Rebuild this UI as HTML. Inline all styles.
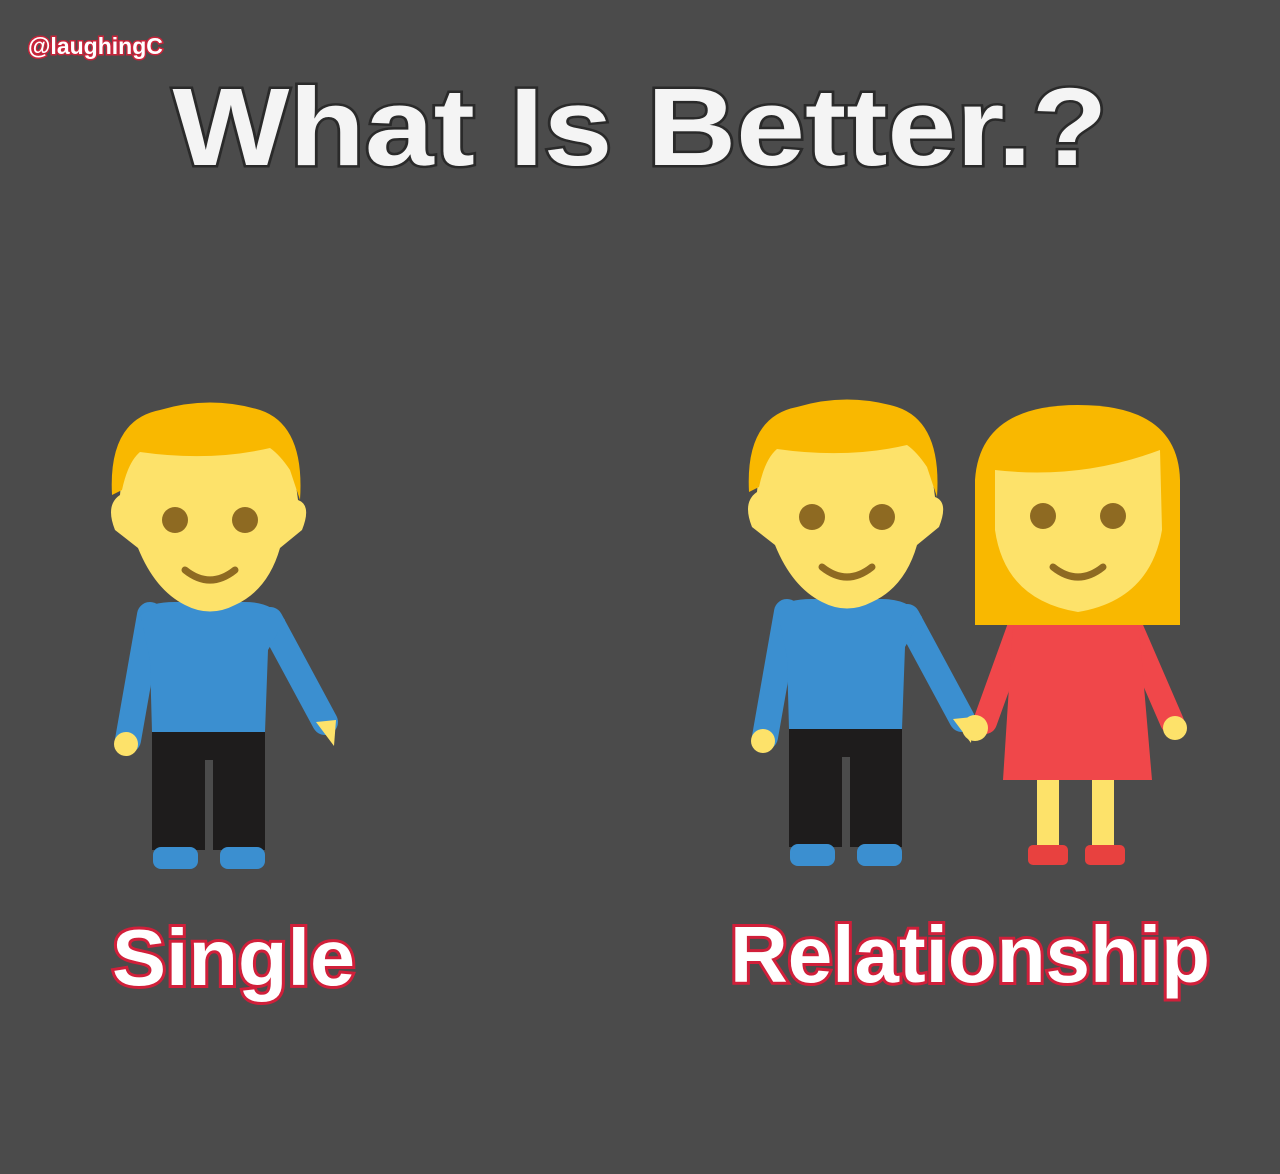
<!DOCTYPE html>
<html><head><meta charset="utf-8"><style>
html,body{margin:0;padding:0;background:#4b4b4b;}
svg{display:block}
text{font-family:"Liberation Sans",sans-serif;font-weight:bold;paint-order:stroke fill;}
</style></head><body>
<svg width="1280" height="1174" viewBox="0 0 1280 1174" xmlns="http://www.w3.org/2000/svg">
<rect width="1280" height="1174" fill="#4b4b4b"/>
<defs>
<g id="man">
  <path d="M150 615 L128 740" stroke="#3b8fd0" stroke-width="26" stroke-linecap="round" fill="none"/>
  <path d="M270 620 L325 722" stroke="#3b8fd0" stroke-width="26" stroke-linecap="round" fill="none"/>
  <circle cx="126" cy="744" r="12" fill="#fde26a"/>
  <path d="M316 722 L336 720 L334 746 Z" fill="#fde26a"/>
  <rect x="152" y="725" width="113" height="125" fill="#1e1c1c"/>
  <rect x="205" y="760" width="8" height="90" fill="#4b4b4b"/>
  <rect x="153" y="847" width="45" height="22" rx="8" fill="#3b8fd0"/>
  <rect x="220" y="847" width="45" height="22" rx="8" fill="#3b8fd0"/>
  <path d="M140 612 Q150 602 175 602 L245 602 Q272 602 285 620 L268 650 L265 732 L152 732 L150 660 Z" fill="#3b8fd0"/>
  <path d="M125 440 L290 440 L298 500 Q312 505 302 530 L280 548 Q268 590 235 605 Q210 618 185 605 Q155 590 138 548 L115 530 Q105 505 120 495 Z" fill="#fde26a"/>
  <path d="M112 495 Q108 420 160 410 Q210 395 260 410 Q305 425 300 500 L290 470 Q280 455 270 448 Q210 462 140 452 Q128 462 122 490 Z" fill="#f9b800"/>
  <circle cx="175" cy="520" r="13" fill="#8e6a22"/>
  <circle cx="245" cy="520" r="13" fill="#8e6a22"/>
  <path d="M185 570 Q210 590 235 570" stroke="#8e6a22" stroke-width="7" stroke-linecap="round" fill="none"/>
</g>
</defs>
<use href="#man"/>
<use href="#man" transform="translate(637,-3)"/>
<g>
  <path d="M1020 625 L985 722" stroke="#f0474a" stroke-width="24" stroke-linecap="round" fill="none"/>
  <path d="M1130 625 L1172 722" stroke="#f0474a" stroke-width="24" stroke-linecap="round" fill="none"/>
  <circle cx="975" cy="728" r="13" fill="#fde26a"/>
  <circle cx="1175" cy="728" r="12" fill="#fde26a"/>
  <rect x="1037" y="778" width="22" height="70" fill="#fde26a"/>
  <rect x="1092" y="778" width="22" height="70" fill="#fde26a"/>
  <rect x="1028" y="845" width="40" height="20" rx="5" fill="#e8413f"/>
  <rect x="1085" y="845" width="40" height="20" rx="5" fill="#e8413f"/>
  <path d="M1025 612 L1125 612 Q1140 620 1140 640 L1152 780 L1003 780 L1012 640 Q1012 620 1025 612 Z" fill="#f0474a"/>
  <path d="M975 625 L975 480 Q980 405 1078 405 Q1178 405 1180 480 L1180 625 Z" fill="#f9b800"/>
  <path d="M995 470 Q1080 480 1160 450 L1162 530 Q1150 600 1078 612 Q1005 600 995 530 Z" fill="#fde26a"/>
  <circle cx="1043" cy="516" r="13" fill="#8e6a22"/>
  <circle cx="1113" cy="516" r="13" fill="#8e6a22"/>
  <path d="M1053 567 Q1078 587 1103 567" stroke="#8e6a22" stroke-width="7" stroke-linecap="round" fill="none"/>
</g>
<text x="28" y="54" font-size="23" fill="#fff" stroke="#c8243a" stroke-width="3">@laughingC</text>
<text x="640" y="165" font-size="110" text-anchor="middle" fill="#f4f4f4" stroke="#2a2a2a" stroke-width="5" textLength="935" lengthAdjust="spacingAndGlyphs">What Is Better.?</text>
<text x="112" y="985" font-size="80" fill="#fff" stroke="#d11f3a" stroke-width="6" textLength="243" lengthAdjust="spacingAndGlyphs">Single</text>
<text x="730" y="982" font-size="80" fill="#fff" stroke="#d11f3a" stroke-width="6" textLength="480" lengthAdjust="spacingAndGlyphs">Relationship</text>
</svg>
</body></html>
